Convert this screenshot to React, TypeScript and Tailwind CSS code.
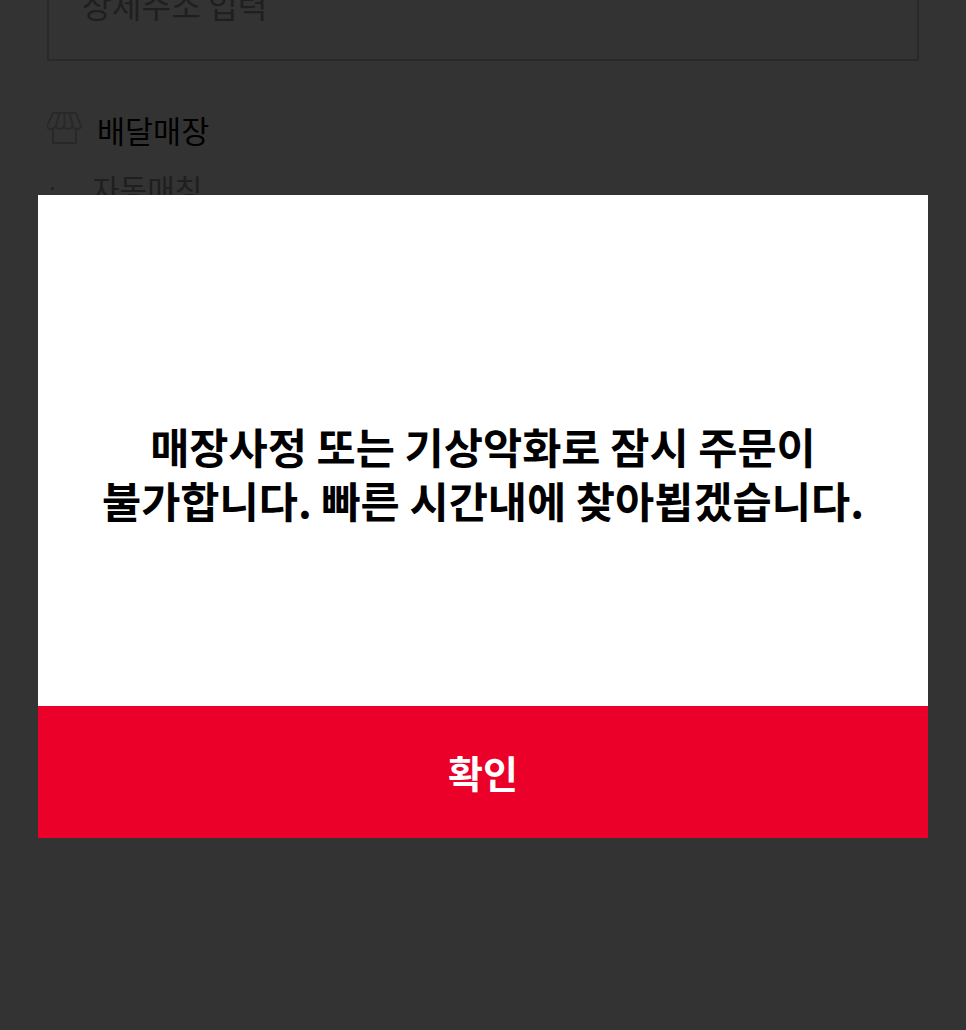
const font = { fontFamily: '"Noto Sans CJK KR", sans-serif' };

export default function App() {
  return (
    <div className="relative h-[1030px] w-full overflow-hidden bg-white" style={font}>
      <div className="-mt-[40px] pl-[47px] pr-[47px]">
        <div className="flex h-[101px] items-start border-2 border-[#cccccc] px-[33px] pt-[20px] text-[32.3px] leading-[44px] text-[#999999]">
          상세주소 입력
        </div>
        <div className="mt-[46px] flex h-[46px] items-center gap-[15px]">
          <svg width="35" height="32" viewBox="0 0 35 32" fill="none" stroke="#c8c8c8" strokeWidth="2" strokeLinejoin="round" className="shrink-0 -translate-y-[2px]">
            <path d="M6 1h23l5 13c0 2-2 3-4 3-2.500 0-4-1-4.500-3-.5 2-3 3-4.500 3s-3.500-1-4-3c-.5 2-2.500 3-4 3s-4-1-4.500-3c-.5 2-2.500 3-4.500 3s-4-1-4-3z" />
            <path d="M6 17v14h23V17" />
            <path d="M12.500 1 9 14M17.500 1v13M22.500 1 26 14" />
          </svg>
          <span className="text-[30.5px] leading-[46px] text-black">배달매장</span>
        </div>
        <div className="mt-[13px] flex items-center text-[30px] leading-[44px] text-[#999999]">
          <span className="ml-[4px] mr-[38px] h-[3px] w-[3px] rounded-full bg-[#999999]" />
          자동매칭
        </div>
      </div>

      <div className="fixed inset-0 flex flex-col items-center bg-black/80 pt-[195px]">
        <div className="flex w-[890px] flex-col bg-white">
          <div className="flex h-[511px] items-center justify-center pt-[45px] text-center text-[42.6px] font-bold leading-[54px] text-black">
            <p>
              매장사정 또는 기상악화로 잠시 주문이
              <br />
              불가합니다. 빠른 시간내에 찾아뵙겠습니다.
            </p>
          </div>
          <button className="flex h-[132px] w-full items-center justify-center bg-[#eb0029] text-[38px] font-bold leading-none text-white">
            확인
          </button>
        </div>
      </div>
    </div>
  );
}
